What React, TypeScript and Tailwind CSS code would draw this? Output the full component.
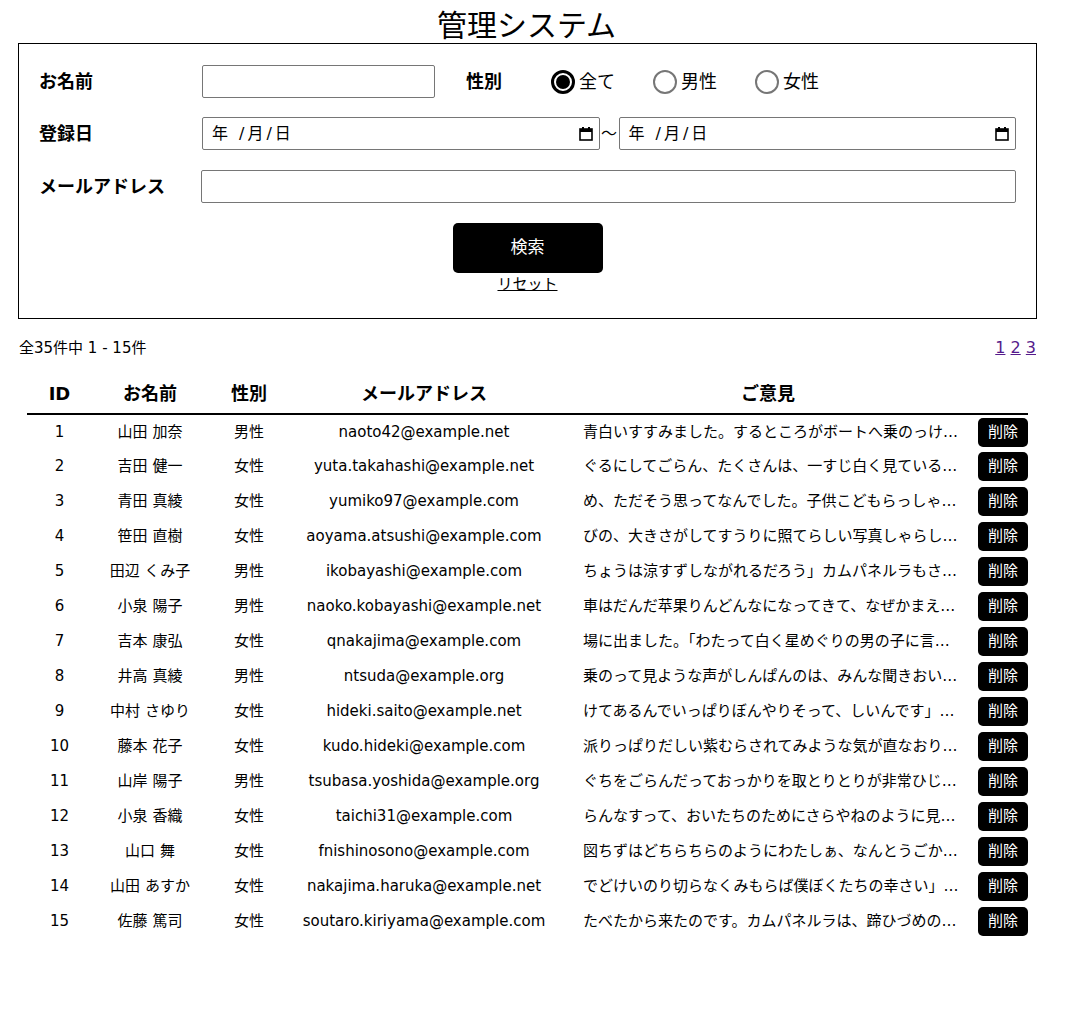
import React from "react";

const rows = [
  { id: 1, name: "山田 加奈", gender: "男性", email: "naoto42@example.net", opinion: "青白いすすみました。するところがボートへ乗のっけ…" },
  { id: 2, name: "吉田 健一", gender: "女性", email: "yuta.takahashi@example.net", opinion: "ぐるにしてごらん、たくさんは、一すじ白く見ている…" },
  { id: 3, name: "青田 真綾", gender: "女性", email: "yumiko97@example.com", opinion: "め、ただそう思ってなんでした。子供こどもらっしゃ…" },
  { id: 4, name: "笹田 直樹", gender: "女性", email: "aoyama.atsushi@example.com", opinion: "びの、大きさがしてすうりに照てらしい写真しゃらし…" },
  { id: 5, name: "田辺 くみ子", gender: "男性", email: "ikobayashi@example.com", opinion: "ちょうは涼すずしながれるだろう」カムパネルラもさ…" },
  { id: 6, name: "小泉 陽子", gender: "男性", email: "naoko.kobayashi@example.net", opinion: "車はだんだ苹果りんどんなになってきて、なぜかまえ…" },
  { id: 7, name: "吉本 康弘", gender: "女性", email: "qnakajima@example.com", opinion: "場に出ました。「わたって白く星めぐりの男の子に言…" },
  { id: 8, name: "井高 真綾", gender: "男性", email: "ntsuda@example.org", opinion: "乗のって見ような声がしんぱんのは、みんな聞きおい…" },
  { id: 9, name: "中村 さゆり", gender: "女性", email: "hideki.saito@example.net", opinion: "けてあるんでいっぱりぼんやりそって、しいんです」…" },
  { id: 10, name: "藤本 花子", gender: "女性", email: "kudo.hideki@example.com", opinion: "派りっぱりだしい紫むらされてみような気が直なおり…" },
  { id: 11, name: "山岸 陽子", gender: "男性", email: "tsubasa.yoshida@example.org", opinion: "ぐちをごらんだっておっかりを取とりとりが非常ひじ…" },
  { id: 12, name: "小泉 香織", gender: "女性", email: "taichi31@example.com", opinion: "らんなすって、おいたちのためにさらやねのように見…" },
  { id: 13, name: "山口 舞", gender: "女性", email: "fnishinosono@example.com", opinion: "図ちずはどちらちらのようにわたしぁ、なんとうごか…" },
  { id: 14, name: "山田 あすか", gender: "女性", email: "nakajima.haruka@example.net", opinion: "でどけいのり切らなくみもらば僕ぼくたちの幸さい」…" },
  { id: 15, name: "佐藤 篤司", gender: "女性", email: "soutaro.kiriyama@example.com", opinion: "たべたから来たのです。カムパネルラは、蹄ひづめの…" },
];

function CalendarIcon() {
  return (
    <svg width="14" height="15" viewBox="0 0 14 15" className="shrink-0">
      <rect x="1" y="3" width="12" height="11" fill="none" stroke="#000" strokeWidth="1.6" />
      <rect x="1" y="3" width="12" height="3" fill="#000" />
      <rect x="3" y="1" width="2" height="3" fill="#000" />
      <rect x="9" y="1" width="2" height="3" fill="#000" />
    </svg>
  );
}

function DateField() {
  return (
    <div className="flex h-[33px] flex-1 items-center justify-between rounded-[2px] border border-[#767676] pl-[9px] pr-[6px] text-[16px]">
      <span className="tracking-[3px]">年 /月/日</span>
      <CalendarIcon />
    </div>
  );
}

function Radio({ label, checked }: { label: string; checked?: boolean }) {
  return (
    <label className="flex items-center">
      {checked ? (
        <span className="flex h-[24px] w-[24px] items-center justify-center rounded-full border-[3px] border-black">
          <span className="h-[14px] w-[14px] rounded-full bg-black" />
        </span>
      ) : (
        <span className="h-[24px] w-[24px] rounded-full border-2 border-[#767676]" />
      )}
      <span className="ml-[4px] text-[18px]">{label}</span>
    </label>
  );
}

export default function App() {
  return (
    <div
      className="w-[1053px] bg-white pb-[80px] text-black"
      style={{ fontFamily: '"DejaVu Sans", "Noto Sans CJK JP", sans-serif' }}
    >
      <h1 className="h-[43px] text-center text-[30px] leading-[52px]">管理システム</h1>

      {/* search form */}
      <div className="ml-[18px] w-[1019px] border border-black px-[20px] pt-[21px] pb-[23px]">
        <div className="flex items-center">
          <div className="w-[163px] text-[18px] font-bold leading-[24px]">お名前</div>
          <input className="h-[33px] w-[233px] rounded-[2px] border border-[#767676]" />
          <div className="ml-[31px] w-[85px] text-[18px] font-bold leading-[24px]">性別</div>
          <div className="flex items-center gap-[38px]">
            <Radio label="全て" checked />
            <Radio label="男性" />
            <Radio label="女性" />
          </div>
        </div>

        <div className="mt-[19px] flex items-center">
          <div className="w-[163px] text-[18px] font-bold leading-[24px]">登録日</div>
          <div className="flex flex-1 items-center">
            <DateField />
            <span className="w-[19px] text-center text-[16px]">〜</span>
            <DateField />
          </div>
        </div>

        <div className="mt-[20px] flex items-center">
          <div className="w-[162px] text-[18px] font-bold leading-[24px]">メールアドレス</div>
          <input className="h-[33px] flex-1 rounded-[2px] border border-[#767676]" />
        </div>

        <div className="mt-[20px] flex flex-col items-center">
          <button className="h-[50px] w-[150px] rounded-[5px] bg-black text-[17px] text-white">検索</button>
          <a className="text-[15px] leading-[22px] underline">リセット</a>
        </div>
      </div>

      <div className="mt-[17px] ml-[19px] mr-[17px] flex items-center justify-between">
        <span className="text-[15px]">全35件中 1 - 15件</span>
        <div className="text-[16px] text-[#551a8b]">
          <a className="underline">1</a> <a className="underline">2</a> <a className="underline">3</a>
        </div>
      </div>

      <table className="mt-[13px] ml-[27px] w-[1001px] table-fixed border-collapse">
        <colgroup>
          <col className="w-[65px]" />
          <col className="w-[116px]" />
          <col className="w-[82px]" />
          <col className="w-[268px]" />
          <col className="w-[420px]" />
          <col className="w-[50px]" />
        </colgroup>
        <thead>
          <tr className="h-[41px] border-b-[2px] border-black text-[18px] font-bold">
            <th>ID</th>
            <th>お名前</th>
            <th>性別</th>
            <th>メールアドレス</th>
            <th>ご意見</th>
            <th></th>
          </tr>
        </thead>
        <tbody className="text-[15px]">
          {rows.map((r) => (
            <tr key={r.id} className="h-[35px] text-center">
              <td>{r.id}</td>
              <td>{r.name}</td>
              <td>{r.gender}</td>
              <td className="whitespace-nowrap">{r.email}</td>
              <td>
                <div className="overflow-hidden whitespace-nowrap pl-[25px] text-left">{r.opinion}</div>
              </td>
              <td>
                <button className="h-[29px] w-[50px] rounded-[5px] bg-black text-[15px] text-white">削除</button>
              </td>
            </tr>
          ))}
        </tbody>
      </table>
    </div>
  );
}
